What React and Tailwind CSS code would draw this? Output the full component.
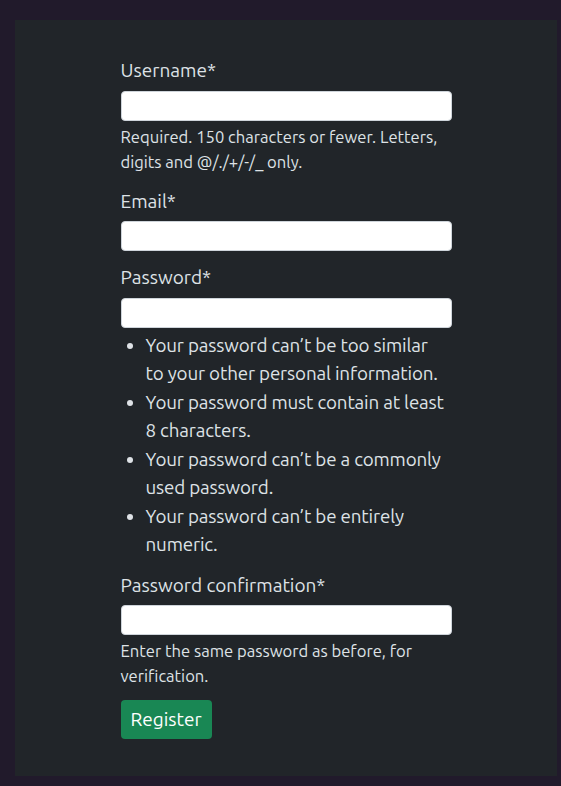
import React from 'react';

const font = { fontFamily: 'Ubuntu, Lato, "Noto Sans", sans-serif' };

function Field({ label, help, children }) {
  return (
    <div className="mb-[10px]">
      <label className="block text-[19px] leading-[28.5px] text-[#dee2e6] pt-[2px] mb-[6px]">{label}</label>
      <input
        type="text"
        className="block w-full h-[30px] rounded-[4px] border border-[#ced4da] bg-white px-3 text-black outline-none"
      />
      {help && <div className="mt-1 text-[16.6px] leading-[25px] text-[#dee2e6]">{help}</div>}
      {children}
    </div>
  );
}

export default function App() {
  return (
    <div className="min-h-screen bg-[#211a2b] pt-5 pl-[15px] pr-1 pb-[10px]" style={font}>
      <div className="bg-[#212529] h-[756px] pt-[34px]">
        <form className="w-[331px] mx-auto">
          <Field label="Username*" help="Required. 150 characters or fewer. Letters, digits and @/./+/-/_ only." />
          <Field label="Email*" />
          <Field label="Password*">
            <ul className="mt-[3px] pl-[25px] pr-[5px] list-disc text-[18.8px] tracking-[-0.15px] leading-[28.5px] text-[#dee2e6]">
              <li>Your password can’t be too similar to your other personal information.</li>
              <li>Your password must contain at least 8 characters.</li>
              <li>Your password can’t be a commonly used password.</li>
              <li>Your password can’t be entirely numeric.</li>
            </ul>
          </Field>
          <Field label="Password confirmation*" help="Enter the same password as before, for verification." />
          <button
            type="submit"
            className="mt-[1px] h-[39px] px-[10px] rounded-[4px] bg-[#198754] text-white text-[19px] leading-[28.5px]"
          >
            Register
          </button>
        </form>
      </div>
    </div>
  );
}
